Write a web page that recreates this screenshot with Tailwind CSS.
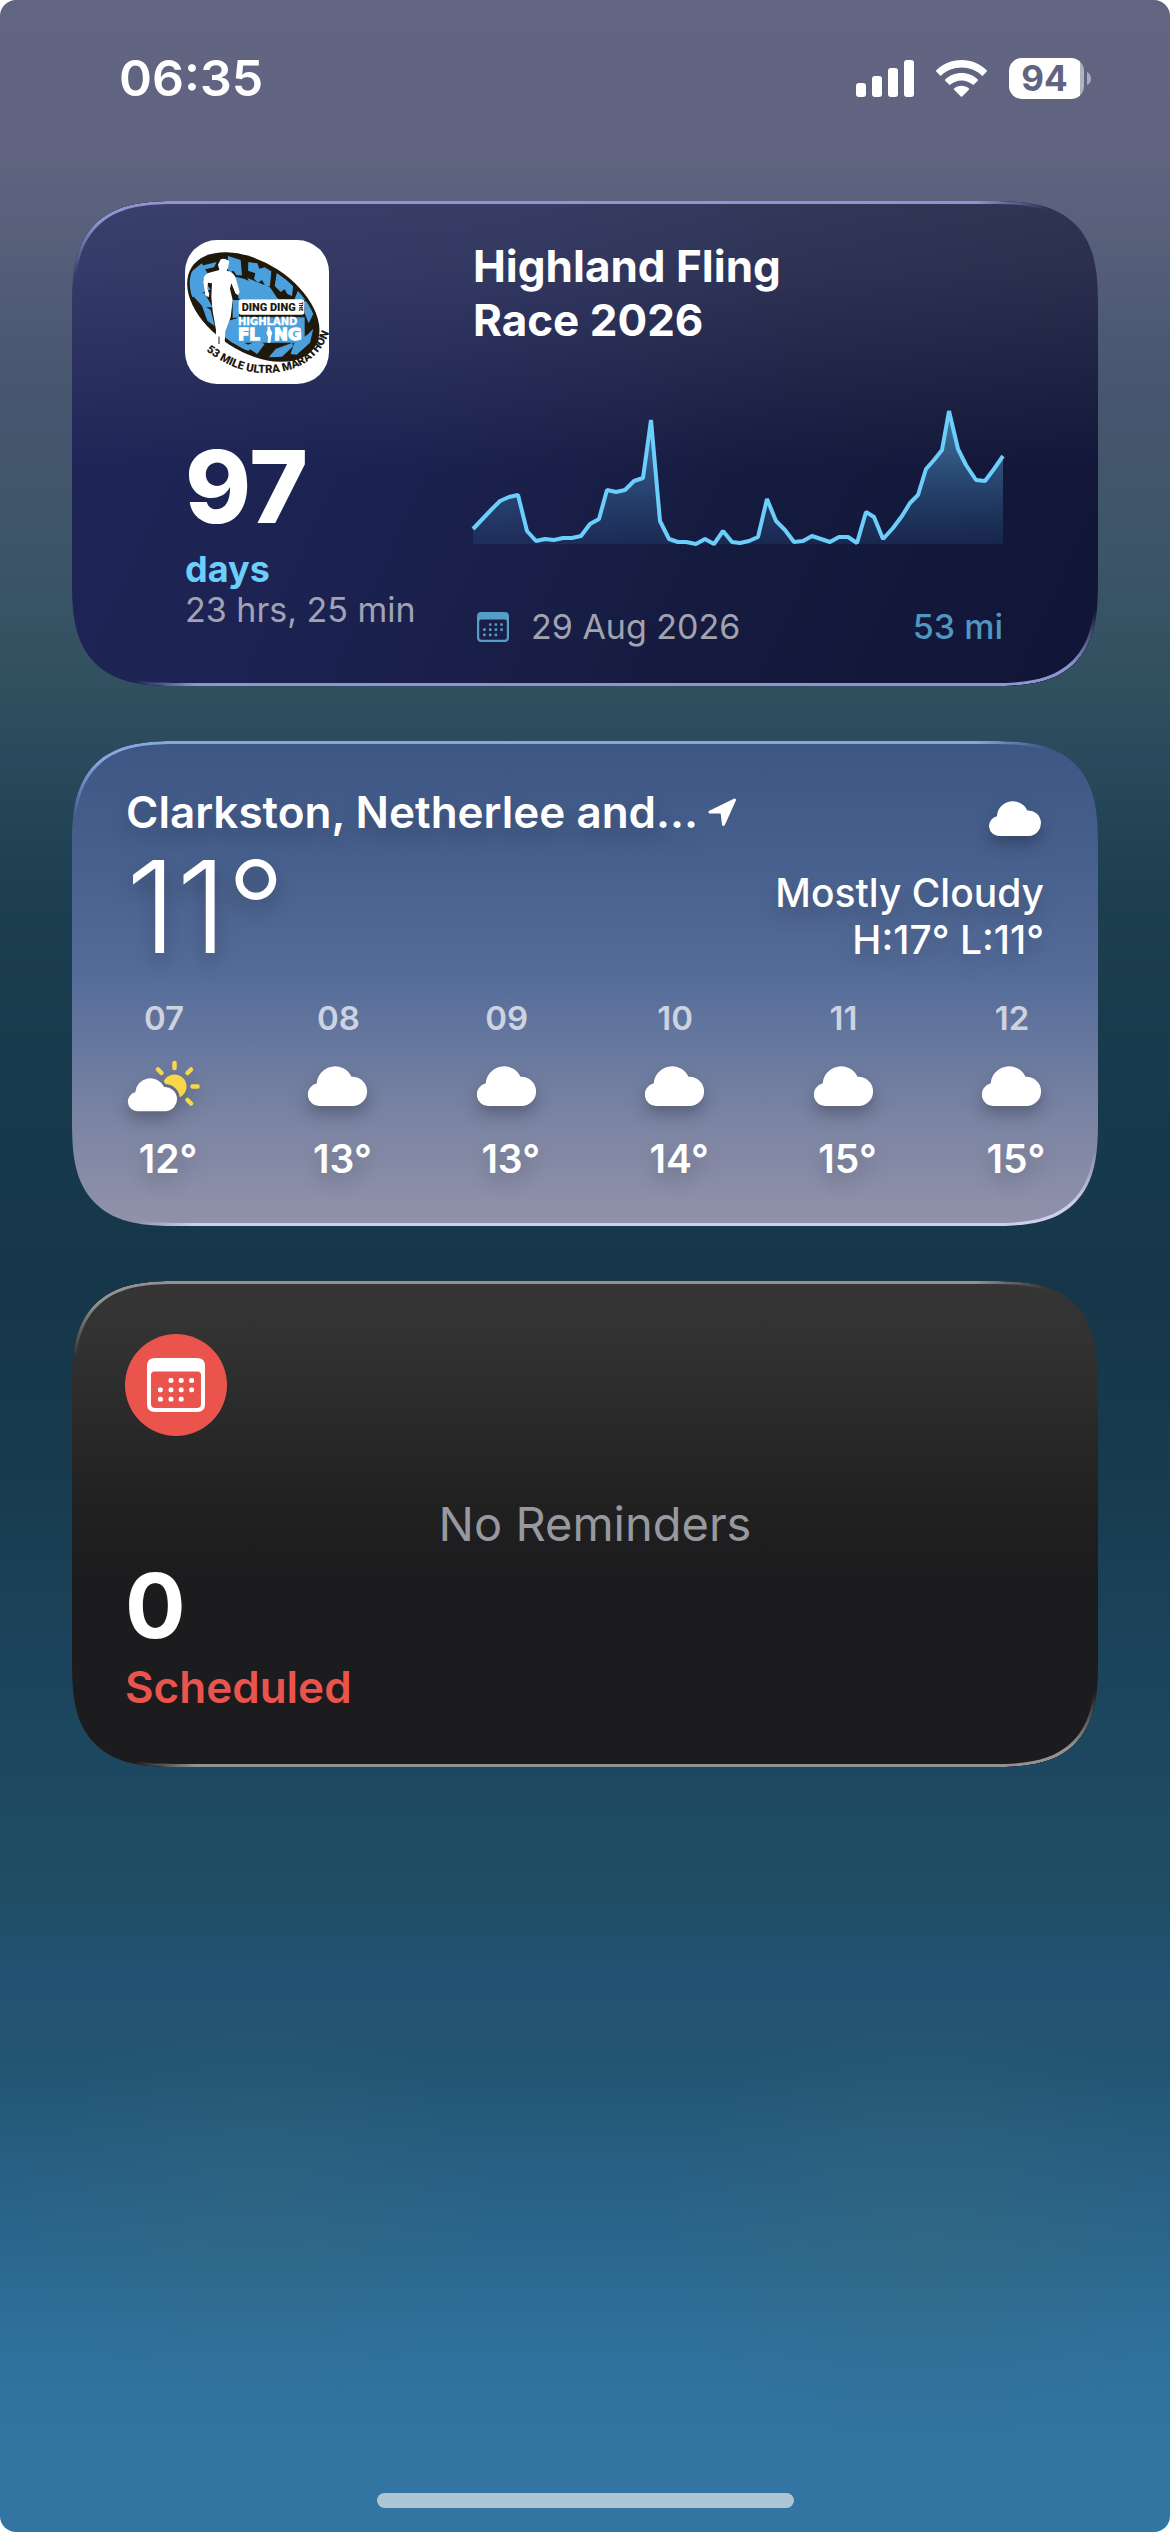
<!DOCTYPE html>
<html lang="en">
<head>
<meta charset="utf-8">
<meta name="viewport" content="width=device-width, initial-scale=1">
<title>Widgets</title>
<script src="https://cdn.jsdelivr.net/npm/@tailwindcss/browser@4"></script>
</head>
<body class="bg-white font-['Inter',sans-serif] text-white">

<!-- Shared icon shapes -->
<svg class="hidden" aria-hidden="true">
  <symbol id="cloud" viewBox="0 0 60 40">
    <path fill="#fff" d="M11.5 40A11.5 11.5 0 0 1 8.7 17.3A18.3 18.3 0 0 1 43.5 10.8A14.6 14.6 0 1 1 45.4 40Z"/>
  </symbol>
  <symbol id="calendar" viewBox="0 0 58 54">
    <path fill="currentColor" fill-rule="evenodd" d="M8 0H50Q58 0 58 8V46Q58 54 50 54H8Q0 54 0 46V8Q0 0 8 0ZM7.500 13.500Q4 13.500 4 17V46Q4 50 8 50H50Q54 50 54 46V17Q54 13.500 50.500 13.500Z"/>
    <g fill="currentColor">
      <rect x="21.600" y="20" width="4.800" height="4.800" rx="1.600"/><rect x="31.800" y="20" width="4.800" height="4.800" rx="1.600"/><rect x="42.200" y="20" width="4.800" height="4.800" rx="1.600"/>
      <rect x="11" y="29.400" width="4.800" height="4.800" rx="1.600"/><rect x="21.600" y="29.400" width="4.800" height="4.800" rx="1.600"/><rect x="31.800" y="29.400" width="4.800" height="4.800" rx="1.600"/><rect x="42.200" y="29.400" width="4.800" height="4.800" rx="1.600"/>
      <rect x="11" y="38.800" width="4.800" height="4.800" rx="1.600"/><rect x="21.600" y="38.800" width="4.800" height="4.800" rx="1.600"/><rect x="31.800" y="38.800" width="4.800" height="4.800" rx="1.600"/>
    </g>
  </symbol>
</svg>

<div class="flex min-h-screen flex-col rounded-[16px] bg-[radial-gradient(ellipse_22%_9%_at_79%_88%,#3a6a7855,#3a6a7800),radial-gradient(ellipse_20%_8%_at_22%_87%,#3a6a7840,#3a6a7800),linear-gradient(180deg,#626582_0%,#606480_6%,#5a617c_8.5%,#48566f_15%,#3c5568_22%,#31505f_27%,#2a4b5d_29.500%,#1d3f50_35%,#173a4c_42%,#16374a_51%,#173a4c_57%,#1b435b_65%,#1e4861_70%,#1f4d64_74.500%,#225271_78%,#235673_82%,#286085_86%,#2b698f_89.500%,#2f709b_92.500%,#3274a2_96%,#3274a2_100%)]">

  <!-- Status bar -->
  <header class="flex h-[156px] items-center pr-[79px] pl-[119px]">
    <time class="text-[50px] leading-[60px] font-semibold">06:35</time>
    <div class="ml-auto flex items-center">
      <svg class="h-[37px] w-[58px]" viewBox="0 0 58 37" fill="#fff" role="img" aria-label="Signal">
        <rect x="0" y="23" width="10" height="14" rx="3"/><rect x="16" y="16" width="10" height="21" rx="3"/><rect x="32" y="8" width="10" height="29" rx="3"/><rect x="48" y="0" width="10" height="37" rx="3"/>
      </svg>
      <svg class="ml-[22px] h-[37px] w-[51px]" viewBox="0 0 51 37" fill="#fff" role="img" aria-label="Wi-Fi">
        <path d="M25.500 0C35.400 0 44.300 3.900 50.700 10.300Q51.300 11 50.700 11.600L47 15.400Q46.400 16 45.700 15.400C40.400 10.600 33.300 7.600 25.500 7.600S10.600 10.600 5.300 15.400Q4.600 16 4 15.400L.3 11.600Q-.3 11 .3 10.300C6.700 3.900 15.600 0 25.500 0Z"/>
        <path d="M25.500 13C31.800 13 37.500 15.400 41.800 19.400Q42.400 20 41.800 20.700L37.900 24.600Q37.300 25.200 36.600 24.600C33.600 22 29.800 20.400 25.500 20.400S17.400 22 14.400 24.600Q13.700 25.200 13.100 24.600L9.200 20.700Q8.600 20 9.200 19.400C13.500 15.400 19.200 13 25.500 13Z"/>
        <path d="M25.500 25.700C28.300 25.700 30.900 26.700 32.900 28.400Q33.500 29 32.900 29.700L26.200 36.500Q25.500 37.200 24.800 36.500L18.100 29.700Q17.500 29 18.100 28.400C20.100 26.700 22.700 25.700 25.500 25.700Z"/>
      </svg>
      <div class="ml-[22px] flex h-[41px] w-[75px] rounded-[13px] bg-linear-to-r from-white from-[95%] to-[#b1b2c1] to-[95%]">
        <span class="w-[71px] text-center text-[35px] leading-[41px] font-bold text-[#606480]">94</span>
      </div>
      <svg class="ml-[3px] h-[13px] w-[4px]" viewBox="0 0 4 13" fill="#a9abbb" aria-hidden="true"><path d="M0 0Q4 2 4 6.500T0 13Z"/></svg>
    </div>
  </header>

  <main class="flex flex-col gap-[55px] px-[72px] pt-[45px] pb-10">

    <!-- Race countdown -->
    <section class="relative flex overflow-hidden rounded-[80px] bg-[linear-gradient(180deg,#ffffff1f_0%,#ffffff1a_14%,#ffffff00_56%),linear-gradient(115deg,#1f2558_0%,#1c2250_35%,#151b3f_65%,#111536_100%)] pt-[38px] pr-[95px] pb-[38px] pl-[113px] supports-[corner-shape:squircle]:rounded-[106px] supports-[corner-shape:squircle]:[corner-shape:superellipse(1.5)]">
      <div class="w-[288px] shrink-0">
        <svg class="mt-px block size-[144px] rounded-[32px] bg-white" viewBox="0 0 144 144" role="img" aria-label="Highland Fling logo">
          <defs>
            <clipPath id="tyre"><ellipse cx="250" cy="231" rx="213" ry="124" transform="rotate(33 250 231)"/></clipPath>
            <path id="under" d="M108 362Q180 418 260 428Q420 438 474 318"/>
          </defs>
          <g transform="translate(-15 -10) scale(.33333)">
            <ellipse cx="250" cy="231" rx="220" ry="134" fill="#21180c" transform="rotate(33 250 231)"/>
            <g clip-path="url(#tyre)" fill="#4a9fdc">
              <path d="M40 145L95 100L112 128L98 150L122 178L60 205Z"/>
              <path d="M60 188L104 190L128 232L100 232Z"/>
              <path d="M92 108L140 96L132 112L106 118Z"/>
              <path d="M174 78L212 90L216 136L200 136L190 122L178 128L172 112Z"/>
              <path d="M235 96L262 100L268 116L284 112L304 124L300 168L288 172L276 150L264 158L252 146L256 130L234 122Z"/>
              <path d="M320 130L340 128L348 148L362 148L370 164L366 198L352 192L344 178L332 186L314 168Z"/>
              <path d="M196 140L222 146L296 180L326 208H206Z"/>
              <path d="M232 144L300 172L320 202L250 184Z"/>
              <path d="M388 172L406 186L412 212L398 208L384 222L374 206Z"/>
              <path d="M402 214L422 214L430 252L416 280L404 250Z"/>
              <path d="M188 210H207V262L188 264Z"/>
              <path d="M94 222L122 240L134 288L112 272Z"/>
              <path d="M170 274L204 264L206 334L176 344L160 324Z"/>
              <path d="M178 340L200 324L234 344L262 332L284 342L262 372L240 358L224 374L200 362Z"/>
              <path d="M296 382L318 356L368 338V350L336 380Z"/>
              <path d="M372 340L412 314L430 296L420 338L380 374L362 372Z"/>
              <path d="M200 262H404V338H206Z"/>
            </g>
            <path fill="#fff" d="M152 88Q162 84 172 90L178 94L174 114L170 122Q188 124 196 140L209 186L204 196L196 190L184 160L180 176L188 210L182 262L166 304L164 340L168 354L152 352L148 342L136 342L138 300L128 244L124 200L126 160L114 158L112 176L118 192L116 202L106 196L100 156Q98 140 112 130L148 120L144 104Z"/>
            <path fill="none" stroke="#21180c" stroke-width="3" d="M147 320V342"/>
            <rect x="206" y="208" width="197" height="46" rx="8" fill="#fff"/>
            <text x="215" y="243" font-family="Roboto, sans-serif" font-weight="900" font-size="33" fill="#21180c">DING DING</text>
            <text transform="translate(386 215) rotate(90)" font-family="Roboto, sans-serif" font-weight="900" font-size="15" fill="#21180c">THE</text>
            <text x="204" y="284" font-family="'DejaVu Sans', sans-serif" font-weight="700" font-size="30" fill="#fff" stroke="#fff" stroke-width="1">HIGHLAND</text>
            <text x="204" y="331" font-family="'DejaVu Sans', sans-serif" font-weight="700" font-size="50" fill="#fff" stroke="#fff" stroke-width="4">FL</text>
            <path fill="#fff" d="M292 290h8l1 8 6 10-3 10-3 20h-8l1-18-5-10 4-12Z"/>
            <text x="312" y="331" font-family="'DejaVu Sans', sans-serif" font-weight="700" font-size="50" fill="#fff" stroke="#fff" stroke-width="4">NG</text>
            <text font-family="Roboto, sans-serif" font-weight="900" font-size="34" fill="#21180c"><textPath href="#under">53 MILE ULTRA MARATHON</textPath></text>
          </g>
        </svg>
        <p class="mt-[53px] text-[100px] leading-[100px] font-extrabold">97</p>
        <p class="mt-3 text-[36px] leading-[40px] font-bold text-[#6ccffb]">days</p>
        <p class="text-[34px] leading-[42px] whitespace-nowrap text-[#a1a3b5]">23 hrs, 25 min</p>
      </div>
      <div class="min-w-0 flex-1">
        <h2 class="text-[44px] leading-[54px] font-bold">Highland Fling<br>Race 2026</h2>
        <svg class="mt-[61px] block h-[138px] w-full overflow-visible" viewBox="0 -2 530 138" preserveAspectRatio="none" role="img" aria-label="Elevation profile">
          <defs>
            <linearGradient id="fill" x1="0" y1="0" x2="0" y2="1">
              <stop offset="0" stop-color="#6ccffb" stop-opacity=".52"/>
              <stop offset="1" stop-color="#3f8fd0" stop-opacity=".12"/>
            </linearGradient>
          </defs>
          <path fill="url(#fill)" d="M0 119L18 100L27 91L36 87L45 85L54 121L63 131L72 129L81 130L90 128L99 128L108 126L117 114L126 109L134 80L143 82L152 80L161 71L170 68L178 10L187 111L196 129L205 132L213 132L223 134L232 129L241 134L250 121L259 132L267 133L276 131L285 127L294 89L303 111L312 120L321 132L330 131L339 126L348 129L357 132L366 127L375 127L384 133L393 102L401 107L410 129L420 118L429 106L437 93L445 85L453 59L461 50L469 40L476 1L485 39L493 55L503 70L512 71L521 59L530 46V134H0Z"/>
          <path fill="none" stroke="#6ccffb" stroke-width="4" stroke-linejoin="bevel" d="M0 119L18 100L27 91L36 87L45 85L54 121L63 131L72 129L81 130L90 128L99 128L108 126L117 114L126 109L134 80L143 82L152 80L161 71L170 68L178 10L187 111L196 129L205 132L213 132L223 134L232 129L241 134L250 121L259 132L267 133L276 131L285 127L294 89L303 111L312 120L321 132L330 131L339 126L348 129L357 132L366 127L375 127L384 133L393 102L401 107L410 129L420 118L429 106L437 93L445 85L453 59L461 50L469 40L476 1L485 39L493 55L503 70L512 71L521 59L530 46"/>
        </svg>
        <div class="mt-[60px] flex items-center pl-1 text-[34px] leading-[42px]">
          <svg class="h-[30px] w-[32px] text-[#549ec8]" aria-hidden="true"><use href="#calendar"/></svg>
          <time class="ml-[22px] text-[#a1a3b0]">29 Aug 2026</time>
          <span class="ml-auto font-medium text-[#4f97c1]">53 mi</span>
        </div>
      </div>
      <span class="pointer-events-none absolute inset-0 rounded-[inherit] [corner-shape:inherit] [mask:linear-gradient(#000_20px,#0000_76px,#0000_calc(100%-76px),#000_calc(100%-20px))]">
        <span class="absolute inset-0 rounded-[inherit] bg-[linear-gradient(90deg,#8f95d0_88%,#8f95d000_95%),linear-gradient(90deg,#8f95d000_6%,#8f95d0_12%)] bg-[length:100%_50%,100%_50%] bg-[position:top,bottom] bg-no-repeat p-[3px] [corner-shape:inherit] [mask:linear-gradient(#000_0_0)_exclude,linear-gradient(#000_0_0)_content-box]"></span>
      </span>
    </section>

    <!-- Weather -->
    <section class="relative overflow-hidden rounded-[80px] bg-[linear-gradient(180deg,#3d5684_0%,#48608d_25%,#566d9a_50%,#6e7ca0_68%,#8389a5_85%,#9092aa_100%)] px-[54px] py-[44px] supports-[corner-shape:squircle]:rounded-[106px] supports-[corner-shape:squircle]:[corner-shape:superellipse(1.5)]">
      <div class="flex h-[54px] items-center">
        <h2 class="text-[44px] leading-[54px] font-semibold [text-shadow:0_10px_20px_rgb(0_0_0/0.2)]">Clarkston, Netherlee and…</h2>
        <svg class="ml-2.5 size-[29px]" viewBox="0 0 29 29" role="img" aria-label="Current location"><path fill="#fff" stroke="#fff" stroke-width="3" stroke-linejoin="round" d="M26.500 2L2 14H14L15.500 26.500Z"/></svg>
        <svg class="mt-3 mr-0.5 ml-auto h-[35px] w-[53px] overflow-visible drop-shadow-[0_8px_8px_rgb(0_0_0/0.25)]" role="img" aria-label="Cloudy"><use href="#cloud"/></svg>
      </div>
      <div class="mt-1 flex items-end justify-between">
        <p class="text-[128px] leading-[128px] font-light [text-shadow:0_10px_20px_rgb(0_0_0/0.25)]">11°</p>
        <p class="pb-2 text-right text-[39px] leading-[47px] font-medium [text-shadow:0_10px_20px_rgb(0_0_0/0.2)]">Mostly Cloudy<br>H:17° L:11°</p>
      </div>
      <ul class="mt-[27px] flex justify-between px-0.5 text-[39px] leading-[47px] font-semibold">
        <li class="flex w-[72px] flex-col items-center">
          <span class="text-[33px] leading-[40px] text-white/70">07</span>
          <svg class="mt-[22px] h-[52px] w-[72px] overflow-visible drop-shadow-[0_8px_8px_rgb(0_0_0/0.25)]" viewBox="0 0 72 52" role="img" aria-label="Partly cloudy">
            <defs>
              <path id="small-cloud" transform="translate(0 18) scale(.83)" d="M11.500 40A11.500 11.500 0 0 1 8.700 17.300A18.300 18.300 0 0 1 43.500 10.800A14.600 14.600 0 1 1 45.400 40Z"/>
              <mask id="sun-gap"><rect width="72" height="52" fill="#fff"/><use href="#small-cloud" fill="#000" stroke="#000" stroke-width="7"/></mask>
            </defs>
            <circle cx="46.500" cy="26.500" r="12" fill="#f8d84a" mask="url(#sun-gap)"/>
            <path stroke="#f8d84a" stroke-width="4.500" stroke-linecap="round" d="M46.500 3V8M64.500 26.500H69.500M59.500 13L63 9.500M33.500 13L30 9.500M59.500 40L63 43.500"/>
            <use href="#small-cloud" fill="#fff"/>
          </svg>
          <span class="mt-[23px] pl-2 [text-shadow:0_10px_20px_rgb(0_0_0/0.2)]">12°</span>
        </li>
        <li class="flex w-[60px] flex-col items-center">
          <span class="text-[33px] leading-[40px] text-white/70">08</span>
          <svg class="mt-[28px] mb-[6px] h-[40px] w-[60px] overflow-visible drop-shadow-[0_8px_8px_rgb(0_0_0/0.25)]" role="img" aria-label="Cloudy"><use href="#cloud"/></svg>
          <span class="mt-[23px] pl-2 [text-shadow:0_10px_20px_rgb(0_0_0/0.2)]">13°</span>
        </li>
        <li class="flex w-[60px] flex-col items-center">
          <span class="text-[33px] leading-[40px] text-white/70">09</span>
          <svg class="mt-[28px] mb-[6px] h-[40px] w-[60px] overflow-visible drop-shadow-[0_8px_8px_rgb(0_0_0/0.25)]" role="img" aria-label="Cloudy"><use href="#cloud"/></svg>
          <span class="mt-[23px] pl-2 [text-shadow:0_10px_20px_rgb(0_0_0/0.2)]">13°</span>
        </li>
        <li class="flex w-[60px] flex-col items-center">
          <span class="text-[33px] leading-[40px] text-white/70">10</span>
          <svg class="mt-[28px] mb-[6px] h-[40px] w-[60px] overflow-visible drop-shadow-[0_8px_8px_rgb(0_0_0/0.25)]" role="img" aria-label="Cloudy"><use href="#cloud"/></svg>
          <span class="mt-[23px] pl-2 [text-shadow:0_10px_20px_rgb(0_0_0/0.2)]">14°</span>
        </li>
        <li class="flex w-[60px] flex-col items-center">
          <span class="text-[33px] leading-[40px] text-white/70">11</span>
          <svg class="mt-[28px] mb-[6px] h-[40px] w-[60px] overflow-visible drop-shadow-[0_8px_8px_rgb(0_0_0/0.25)]" role="img" aria-label="Cloudy"><use href="#cloud"/></svg>
          <span class="mt-[23px] pl-2 [text-shadow:0_10px_20px_rgb(0_0_0/0.2)]">15°</span>
        </li>
        <li class="flex w-[60px] flex-col items-center">
          <span class="text-[33px] leading-[40px] text-white/70">12</span>
          <svg class="mt-[28px] mb-[6px] h-[40px] w-[60px] overflow-visible drop-shadow-[0_8px_8px_rgb(0_0_0/0.25)]" role="img" aria-label="Cloudy"><use href="#cloud"/></svg>
          <span class="mt-[23px] pl-2 [text-shadow:0_10px_20px_rgb(0_0_0/0.2)]">15°</span>
        </li>
      </ul>
      <span class="pointer-events-none absolute inset-0 rounded-[inherit] [corner-shape:inherit] [mask:linear-gradient(#000_20px,#0000_76px,#0000_calc(100%-76px),#000_calc(100%-20px))]">
        <span class="absolute inset-0 rounded-[inherit] bg-[linear-gradient(90deg,#86a8df_88%,#86a8df00_95%),linear-gradient(90deg,#cdcfee00_6%,#cdcfee_12%)] bg-[length:100%_50%,100%_50%] bg-[position:top,bottom] bg-no-repeat p-[3px] [corner-shape:inherit] [mask:linear-gradient(#000_0_0)_exclude,linear-gradient(#000_0_0)_content-box]"></span>
      </span>
    </section>

    <!-- Reminders -->
    <section class="relative grid grid-cols-[1fr_auto_1fr] items-center overflow-hidden rounded-[80px] bg-[linear-gradient(180deg,#353536_0%,#323233_12%,#212122_45%,#1c1c1e_60%,#1c1c1e_100%)] px-[53px] py-[53px] supports-[corner-shape:squircle]:rounded-[106px] supports-[corner-shape:squircle]:[corner-shape:superellipse(1.5)]">
      <div>
        <div class="flex size-[102px] items-center justify-center rounded-full bg-[#eb544d]">
          <svg class="h-[54px] w-[58px]" aria-hidden="true"><use href="#calendar"/></svg>
        </div>
        <p class="mt-[125px] text-[90px] leading-[90px] font-bold">0</p>
        <h2 class="mt-[9px] text-[44px] leading-[54px] font-semibold text-[#eb544d]">Scheduled</h2>
      </div>
      <p class="pl-5 text-[47px] leading-[60px] text-[#98989f]">No Reminders</p>
      <span class="pointer-events-none absolute inset-0 rounded-[inherit] [corner-shape:inherit] [mask:linear-gradient(#000_20px,#0000_76px,#0000_calc(100%-76px),#000_calc(100%-20px))]">
        <span class="absolute inset-0 rounded-[inherit] bg-[linear-gradient(90deg,#929293_88%,#92929300_95%),linear-gradient(90deg,#92929300_6%,#929293_12%)] bg-[length:100%_50%,100%_50%] bg-[position:top,bottom] bg-no-repeat p-[3px] [corner-shape:inherit] [mask:linear-gradient(#000_0_0)_exclude,linear-gradient(#000_0_0)_content-box]"></span>
      </span>
    </section>
  </main>

  <!-- Home indicator -->
  <div class="mx-auto mt-auto mb-[24px] h-[15px] w-[417px] rounded-full bg-[#aec5d4]"></div>
</div>
</body>
</html>
